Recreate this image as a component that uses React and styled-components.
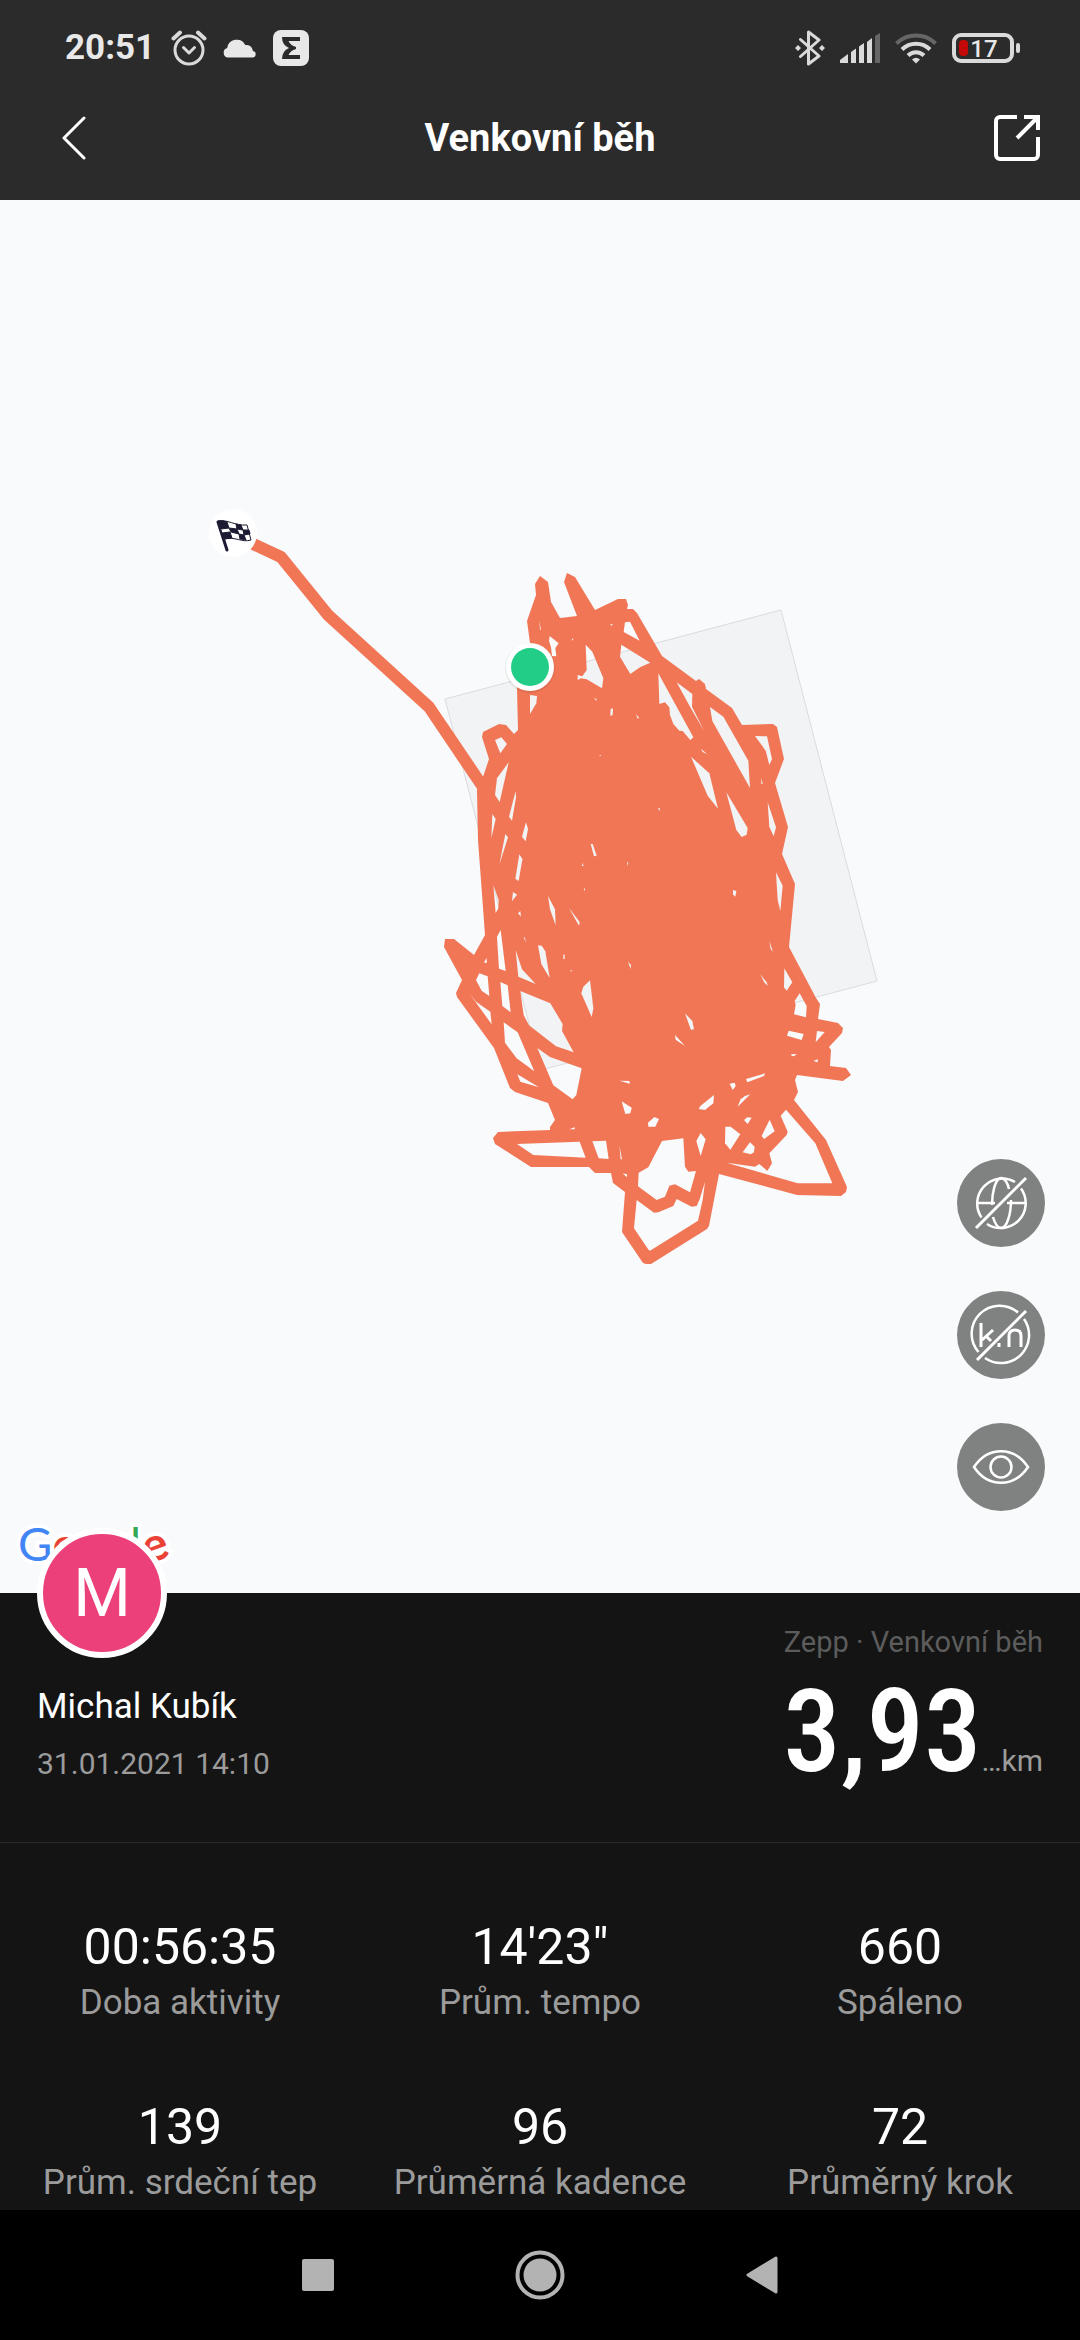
import React from "react";
import styled, { createGlobalStyle } from "styled-components";

const GlobalStyle = createGlobalStyle`
  *, *::before, *::after { box-sizing: border-box; }
  body { margin: 0; background: #000; }
  button { font: inherit; color: inherit; background: none; border: 0; padding: 0; cursor: pointer; }
  svg { display: block; }
`;

const Screen = styled.div`
  display: flex;
  flex-direction: column;
  min-height: 100vh;
  background: #141414;
  color: #fff;
  font-family: Roboto, "Noto Sans", sans-serif;
`;

const Header = styled.header`
  background: #2b2b2b;
  padding-bottom: 20px;
`;

const StatusBar = styled.div`
  display: flex;
  align-items: center;
  justify-content: space-between;
  height: 96px;
  padding: 0 60px 0 65px;
  color: #e8e8e8;
`;

const StatusGroup = styled.div`
  display: flex;
  align-items: center;
  gap: ${(p) => p.$gap}px;
`;

const Clock = styled.time`
  font-size: 35px;
  line-height: 40px;
  font-weight: 700;
`;

const TitleBar = styled.div`
  display: grid;
  grid-template-columns: 1fr auto 1fr;
  align-items: center;
  height: 84px;
  padding: 0 40px;
`;

const Title = styled.h1`
  margin: 0;
  font-size: 38px;
  line-height: 48px;
  font-weight: 700;
`;

const HeaderButton = styled.button`
  justify-self: ${(p) => p.$side};
  padding-left: 20px;
`;

const MapArea = styled.main`
  position: relative;
  flex: 1 0 1393px;
  background: #f8fafc;
  overflow: hidden;
`;

const MapDrawing = styled.svg`
  position: absolute;
  inset: 0;
  width: 100%;
  height: 100%;
`;

const MapTools = styled.div`
  position: absolute;
  right: 35px;
  bottom: 82px;
  display: flex;
  flex-direction: column;
  gap: 44px;
`;

const ToolButton = styled.button`
  width: 88px;
  height: 88px;
  border-radius: 50%;
  background: #808281;
`;

const Logo = styled.div`
  position: absolute;
  left: 18px;
  bottom: 20px;
  font-family: Lato, sans-serif;
  font-size: 47px;
  line-height: 60px;
  -webkit-text-stroke: 8px #fff;
  paint-order: stroke fill;
`;

const LogoLetter = styled.span`
  display: inline-block;
  color: ${(p) => p.$color};
  font-weight: ${(p) => (p.$tilt ? 700 : 400)};
  rotate: ${(p) => p.$tilt || "0deg"};
`;

const Profile = styled.section`
  position: relative;
  display: flex;
  justify-content: space-between;
  height: 250px;
  padding: 29px 37px 0;
  border-bottom: 1px solid #2a2a2a;
`;

const Avatar = styled.div`
  position: absolute;
  top: -65px;
  left: 37px;
  width: 130px;
  height: 130px;
  border: 6px solid #fff;
  border-radius: 50%;
  background: #ec407a;
  text-align: center;
  font-size: 66px;
  line-height: 120px;
`;

const Person = styled.div`
  display: flex;
  flex-direction: column;
  gap: 15px;
  padding-top: 63px;
`;

const Name = styled.div`
  font-size: 35px;
  line-height: 44px;
`;

const DateText = styled.time`
  font-size: 30px;
  line-height: 40px;
  color: #9b9b9b;
`;

const Summary = styled.div`
  display: flex;
  flex-direction: column;
  align-items: flex-end;
`;

const Source = styled.div`
  font-size: 29px;
  line-height: 40px;
  color: #5c5c5c;
`;

const Distance = styled.div`
  display: flex;
  align-items: baseline;
`;

const DistanceValue = styled.strong`
  font-family: "Roboto Condensed", "Open Sans Condensed", Roboto, sans-serif;
  font-size: 115px;
  line-height: 140px;
  font-weight: 500;
`;

const Unit = styled.span`
  font-size: 30px;
  color: #9b9b9b;
`;

const Stats = styled.dl`
  display: grid;
  grid-template-columns: repeat(3, 1fr);
  row-gap: 72px;
  margin: 0;
  padding: 74px 0 5px;
`;

const Stat = styled.div`
  display: flex;
  flex-direction: column-reverse;
  align-items: center;
  gap: 4px;
`;

const StatValue = styled.dd`
  margin: 0;
  font-size: 50px;
  line-height: 60px;
`;

const StatLabel = styled.dt`
  font-size: 35px;
  line-height: 44px;
  color: #9b9b9b;
`;

const NavBar = styled.nav`
  display: flex;
  justify-content: center;
  align-items: center;
  gap: 172px;
  height: 130px;
  background: #000;
`;

const NavButton = styled.button`
  display: grid;
  place-items: center;
  width: 50px;
  height: 50px;
`;

const ROUTE =
  "483,777 489,759 482,737 483,732 499,724 506,725 514,734 518,730 517,688 530,643 527,621 536,595 535,584 540,576 548,582 551,602 560,618 577,616 564,582 567,573 575,577 595,610 618,599 626,599 628,605 627,609 633,609 637,613 662,656 696,681 699,679 705,684 706,689 732,708 742,725 773,724 777,727 784,759 775,783 788,827 782,854 795,884 789,947 816,998 820,1004 818,1019 838,1023 843,1028 842,1033 829,1047 831,1050 830,1066 846,1068 851,1075 843,1081 797,1075 795,1080 798,1092 794,1100 826,1140 847,1187 846,1192 841,1196 797,1195 719,1174 709,1226 707,1229 651,1264 646,1264 643,1263 622,1232 625,1192 613,1183 611,1173 595,1173 589,1167 531,1167 495,1144 493,1138 498,1132 550,1130 550,1127 555,1120 548,1103 515,1092 510,1088 494,1048 457,997 456,993 462,980 444,947 445,939 454,939 474,955 485,935 478,840 477,790";

/* Gaps between the laps, in thirds of a pixel from each sector's corner. */
const GAPS = [
  {
    x: 430,
    y: 560,
    shapes: [
      "600,185 629,242 581,216 585,187",
      "574,254 661,308 630,322 601,342 570,290",
      "467,254 487,275 520,355 516,385 470,358 453,355 443,360 443,345 457,349 470,330",
      "359,228 386,250 376,264 379,289 366,288 363,262 357,242",
      "300,405 321,408 319,430 300,462",
      "195,540 214,532 231,552 211,580",
      "236,607 209,726 195,705 201,655",
      "257,693 258,712 246,782 237,770",
      "187,762 197,777 184,835",
      "288,787 294,807 287,844 276,830",
      "226,822 234,832 208,914",
      "267,884 277,898 275,904",
      "542,447 549,445 548,465 541,468",
      "618,462 628,475 622,475",
      "482,852 488,852 500,887 492,889",
      "328,182 333,210 330,208",
      "540,193 549,193 545,197",
      "492,415 500,417 499,422",
      "425,236 430,236 428,243",
      "506,585 513,585 513,588",
    ],
  },
  {
    x: 630,
    y: 560,
    shapes: [
      "85,340 190,532 181,540 158,513 148,512 130,492 120,465 118,442 105,427 88,432",
      "140,367 187,402 186,440 222,512 180,440",
      "240,441 280,470 355,602 360,684 247,483",
      "375,528 411,529 426,597 418,615 407,572",
      "394,653 398,672 394,672",
      "213,566 232,583 218,576",
      "183,590 238,640 264,746 233,707",
      "289,697 353,804 350,824 335,831 319,810",
      "413,727 438,802 431,829 418,800",
      "438,937 458,977 451,1053 443,1020",
      "309,990 319,993 316,1010 309,1003",
      "418,1143 429,1175 422,1167",
      "84,745 90,745 88,753",
    ],
  },
  {
    x: 430,
    y: 840,
    shapes: [
      "268,43 277,58 266,123 256,116",
      "190,135 206,180 205,205 197,219",
      "249,156 261,164 246,184",
      "264,220 271,213 273,230",
      "354,168 375,208 377,256 360,208",
      "417,204 449,246 447,257",
      "281,290 285,293 287,308",
      "324,316 335,317 346,334 359,414 334,372",
      "257,330 276,388 317,432 265,410",
      "212,270 227,393 207,386 201,290",
      "169,354 171,368 162,368",
      "148,400 173,409 178,468 155,452 138,420",
      "117,458 138,485 181,515 185,553",
      "211,426 233,436 242,517 217,498",
      "271,453 361,490 398,552 396,573 431,637 378,619 297,556 281,525",
      "221,547 263,577 313,694 260,655 225,608",
      "322,624 360,651 455,685 439,765 428,778 370,736",
      "262,703 327,742 271,725",
      "480,421 490,505 485,531 454,460 460,440",
      "400,345 404,343 404,357 400,357",
      "594,365 603,375 602,387",
      "568,722 598,723 600,731",
      "575,784 605,803 601,820 586,822",
      "261,912 449,905 467,953 310,945",
      "487,904 528,902 536,957 506,955",
      "568,915 576,958 572,958",
      "578,1000 591,1003 591,1012",
      "418,868 434,862 434,868",
      "457,68 461,78 456,78",
      "461,142 465,148 463,154",
      "591,66 595,68 593,78",
      "420,390 425,391 425,396",
    ],
  },
  {
    x: 640,
    y: 960,
    shapes: [
      "438,449 526,550 577,670 473,670 260,608 345,620 358,612 382,633 396,610 388,580 440,525 443,515 422,467",
      "66,543 130,535 135,620 145,635 168,633 150,697 105,673 88,677 75,710 50,720 0,683 -6,678 -4,638 25,622",
      "-10,720 42,758 55,757 100,738 110,717 155,740 170,738 180,715 195,665 188,720 174,782 30,872 26,870 -18,805",
      "433,25 457,67 440,92 432,82",
      "479,100 500,138 498,172 462,163 467,135 464,123",
      "446,212 491,222 485,240 441,227",
      "531,213 554,216 527,247",
      "453,283 470,282 462,289 455,287",
      "520,303 533,298 533,307",
      "361,43 380,67 383,78 372,66",
      "135,160 157,183 162,208 153,210",
      "105,225 135,258 107,239",
      "318,357 375,340 372,348 322,367",
      "269,371 284,368 287,378 278,390",
      "222,405 220,430 195,450 176,447 182,437",
      "331,403 293,440 302,418 315,408",
      "312,480 322,472 335,473 323,492",
      "389,479 404,514 372,537 365,528",
      "256,500 272,500 301,523 271,569 255,550",
      "330,547 344,560 342,577 332,583 308,577",
      "182,519 197,538 182,588 169,543",
      "24,488 43,471 57,477 46,500 25,500",
    ],
  },
];

const STATS = [
  ["Doba aktivity", "00:56:35"],
  ["Prům. tempo", "14'23\""],
  ["Spáleno", "660"],
  ["Prům. srdeční tep", "139"],
  ["Průměrná kadence", "96"],
  ["Průměrný krok", "72"],
];

const LOGO = [
  ["G", "#4285f4"],
  ["o", "#ea4335"],
  ["o", "#fbbc05"],
  ["g", "#4285f4"],
  ["l", "#34a853"],
  ["e", "#ea4335", "-20deg"],
];

const AlarmIcon = () => (
  <svg width="36" height="36" viewBox="0 0 36 36" fill="none" stroke="#dadada" strokeWidth="3" strokeLinecap="round" strokeLinejoin="round">
    <circle cx="18" cy="20" r="14" />
    <path d="M12.500 17.500l5.500 5.500 5.500-5.500" />
    <path d="M2.500 8.500l6.500-6M33.500 8.500l-6.500-6" strokeWidth="4" />
  </svg>
);

const CloudIcon = () => (
  <svg width="34" height="20" viewBox="0 0 34 20" fill="#e8e8e8">
    <path d="M5 19.500a4.800 4.800 0 0 1-.8-9.400A9.600 9.600 0 0 1 22.300 7a6.800 6.800 0 0 1 7.700 6 3.300 3.300 0 0 1 0 6.500z" />
  </svg>
);

const SigmaIcon = () => (
  <svg width="36" height="36" viewBox="0 0 36 36">
    <rect width="36" height="36" rx="8" fill="#e8e8e8" />
    <path d="M9 7h18v4H15.500q2 4.500 7.500 6v2q-5.500 1.500-7.500 6H27v4H9q0-8 7-11-7-3-7-11z" fill="#2b2b2b" />
  </svg>
);

const BluetoothIcon = () => (
  <svg width="30" height="36" viewBox="0 0 30 36" fill="none" stroke="#dadada" strokeWidth="3" strokeLinejoin="round" strokeLinecap="round">
    <path d="M5.500 9.500L24 26l-10.500 8V2L24 10 5.500 26.500" />
    <path d="M3 15l3 3-3 3-3-3zM27 15l3 3-3 3-3-3z" fill="#dadada" stroke="none" />
  </svg>
);

const SignalIcon = () => (
  <svg width="40" height="30" viewBox="0 0 40 30" fill="#dadada">
    <path d="M0 27l8-6v9H0zM11 19l5-3.500V30h-5zM19 13.500l5-3.500v20h-5zM27 9l5-4v25h-5z" />
    <path d="M35 3l5-3v30h-5z" fill="#666" />
  </svg>
);

const WifiIcon = () => (
  <svg width="42" height="32" viewBox="0 0 42 32" fill="none" stroke="#dadada" strokeWidth="4">
    <path d="M1.500 11.500a28 28 0 0 1 39 0" stroke="#666" />
    <path d="M7 17.500a20 20 0 0 1 28 0M13 23.500a11.500 11.500 0 0 1 16 0" />
    <path d="M17 27.500q4-3.500 8 0l-4 4z" fill="#dadada" stroke="none" />
  </svg>
);

const BatteryIcon = () => (
  <svg width="68" height="30" viewBox="0 0 68 30">
    <rect x="2" y="2" width="58" height="26" rx="7" fill="none" stroke="#dadada" strokeWidth="4" />
    <rect x="64" y="10" width="4" height="10" rx="2" fill="#dadada" />
    <rect x="7" y="7" width="9" height="16" rx="4" fill="#c40808" />
    <text x="32" y="24" fill="#e8e8e8" fontSize="24" fontWeight="500" textAnchor="middle">17</text>
  </svg>
);

const BackIcon = () => (
  <svg width="28" height="44" viewBox="0 0 28 44" fill="none" stroke="#fff" strokeWidth="3" strokeLinecap="round" strokeLinejoin="round">
    <path d="M24 2L4 22l20 20" />
  </svg>
);

const ShareIcon = () => (
  <svg width="46" height="46" viewBox="0 0 46 46" fill="none" stroke="#fff" strokeWidth="4">
    <path d="M23 2H6a4 4 0 0 0-4 4v34a4 4 0 0 0 4 4h34a4 4 0 0 0 4-4V22" />
    <path d="M30 2h14v13M43 3L23 23" />
  </svg>
);

const GlobeOffIcon = () => (
  <svg width="88" height="88" viewBox="0 0 88 88" fill="none" stroke="#fff" strokeWidth="2.500">
    <path d="M24.500 58.500A25 25 0 0 1 58 23M64 29.500A25 25 0 0 1 30 65" />
    <path d="M19 44h19M50 44h19M35 46c0-12 3-26 9-27 4 0 7 6 8 11M36 58c2 7 5 11 8 11 6 0 10-14 10-28" />
    <path d="M19 69l50-50" strokeWidth="3" />
  </svg>
);

const DistanceOffIcon = () => (
  <svg width="88" height="88" viewBox="0 0 88 88" fill="none" stroke="#fff" strokeWidth="2.500">
    <path d="M21.500 61A28 28 0 0 1 61 21.500M67 28A28 28 0 0 1 28 67" />
    <path d="M24 32v24M36 39L25 49M30 46l4 4M42 52v4M52 56V45q0-6 6-6t6 6v11" strokeWidth="3" />
    <path d="M20 69l49-49" strokeWidth="3" />
  </svg>
);

const EyeIcon = () => (
  <svg width="88" height="88" viewBox="0 0 88 88" fill="none" stroke="#fff" strokeWidth="2.500">
    <path d="M17 44c14-21 40-21 54 0-14 21-40 21-54 0z" />
    <circle cx="44" cy="44" r="10.500" />
  </svg>
);

const RouteMap = () => (
  <MapDrawing viewBox="0 200 1080 1393" preserveAspectRatio="xMidYMid slice" role="img" aria-label="Mapa trasy">
    <defs>
      <mask id="gaps" maskUnits="userSpaceOnUse" x="400" y="540" width="500" height="760">
        <rect x="400" y="540" width="500" height="760" fill="#fff" />
        {GAPS.map((sector) => (
          <g key={`${sector.x}-${sector.y}`} transform={`translate(${sector.x} ${sector.y}) scale(${1 / 3})`}>
            {sector.shapes.map((points) => (
              <polygon key={points} points={points} />
            ))}
          </g>
        ))}
      </mask>
    </defs>
    <polygon points="445,699 781,610 877,981 541,1070" fill="#f2f3f4" stroke="#dadbdd" />
    <polyline points="253,544 281,557 328,615 429,707 483,787" fill="none" stroke="#f17656" strokeWidth="12" strokeLinejoin="round" />
    <polygon points={ROUTE} fill="#f17656" mask="url(#gaps)" />
    <circle cx="530" cy="668" r="25" fill="#000" opacity=".08" />
    <circle cx="530" cy="667" r="24" fill="#fff" />
    <circle cx="530" cy="667" r="19" fill="#22ce87" />
    <circle cx="233" cy="533" r="24" fill="#fff" />
    <g stroke="#1c1b33" strokeWidth="1" fill="#1c1b33">
      <path d="M218 522l9 28" strokeWidth="3" strokeLinecap="round" />
      <path d="M218 521c9-2 17 5 29 4l4 15c-9 3-16-4-27-1z" fill="#fff" />
      <path d="M218 521q5-1 9 1l2 6-8 1zM236 524l5 1 2 5-6-1zM229 528l8 1 2 5-8-2zM243 530l6 0 1 4-6 1zM222 533l8-1 2 6-8 1zM239 534l5 1 2 5-6-1z" />
    </g>
  </MapDrawing>
);

export default function App() {
  return (
    <Screen>
      <GlobalStyle />
      <Header>
        <StatusBar>
          <StatusGroup $gap={16}>
            <Clock>20:51</Clock>
            <AlarmIcon />
            <CloudIcon />
            <SigmaIcon />
          </StatusGroup>
          <StatusGroup $gap={15}>
            <BluetoothIcon />
            <SignalIcon />
            <WifiIcon />
            <BatteryIcon />
          </StatusGroup>
        </StatusBar>
        <TitleBar>
          <HeaderButton $side="start" aria-label="Zpět">
            <BackIcon />
          </HeaderButton>
          <Title>Venkovní běh</Title>
          <HeaderButton $side="end" aria-label="Sdílet">
            <ShareIcon />
          </HeaderButton>
        </TitleBar>
      </Header>

      <MapArea>
        <RouteMap />
        <Logo>
          {LOGO.map(([letter, color, tilt], i) => (
            <LogoLetter key={i} $color={color} $tilt={tilt}>
              {letter}
            </LogoLetter>
          ))}
        </Logo>
        <MapTools>
          <ToolButton aria-label="Skrýt mapu">
            <GlobeOffIcon />
          </ToolButton>
          <ToolButton aria-label="Skrýt kilometry">
            <DistanceOffIcon />
          </ToolButton>
          <ToolButton aria-label="Zobrazení">
            <EyeIcon />
          </ToolButton>
        </MapTools>
      </MapArea>

      <Profile>
        <Avatar>M</Avatar>
        <Person>
          <Name>Michal Kubík</Name>
          <DateText dateTime="2021-01-31T14:10">31.01.2021 14:10</DateText>
        </Person>
        <Summary>
          <Source>Zepp · Venkovní běh</Source>
          <Distance>
            <DistanceValue>3,93</DistanceValue>
            <Unit>…km</Unit>
          </Distance>
        </Summary>
      </Profile>

      <Stats>
        {STATS.map(([label, value]) => (
          <Stat key={label}>
            <StatLabel>{label}</StatLabel>
            <StatValue>{value}</StatValue>
          </Stat>
        ))}
      </Stats>

      <NavBar>
        <NavButton aria-label="Poslední aplikace">
          <svg width="32" height="32" viewBox="0 0 32 32">
            <rect width="32" height="32" rx="2" fill="#b3b3b3" />
          </svg>
        </NavButton>
        <NavButton aria-label="Domů">
          <svg width="50" height="50" viewBox="0 0 50 50">
            <circle cx="25" cy="25" r="22.500" fill="none" stroke="#b3b3b3" strokeWidth="4" />
            <circle cx="25" cy="25" r="16.500" fill="#b3b3b3" />
          </svg>
        </NavButton>
        <NavButton aria-label="Zpět v systému">
          <svg width="32" height="38" viewBox="0 0 32 38">
            <path d="M2 19L30 2v34z" fill="#b3b3b3" stroke="#b3b3b3" strokeWidth="3" strokeLinejoin="round" />
          </svg>
        </NavButton>
      </NavBar>
    </Screen>
  );
}
